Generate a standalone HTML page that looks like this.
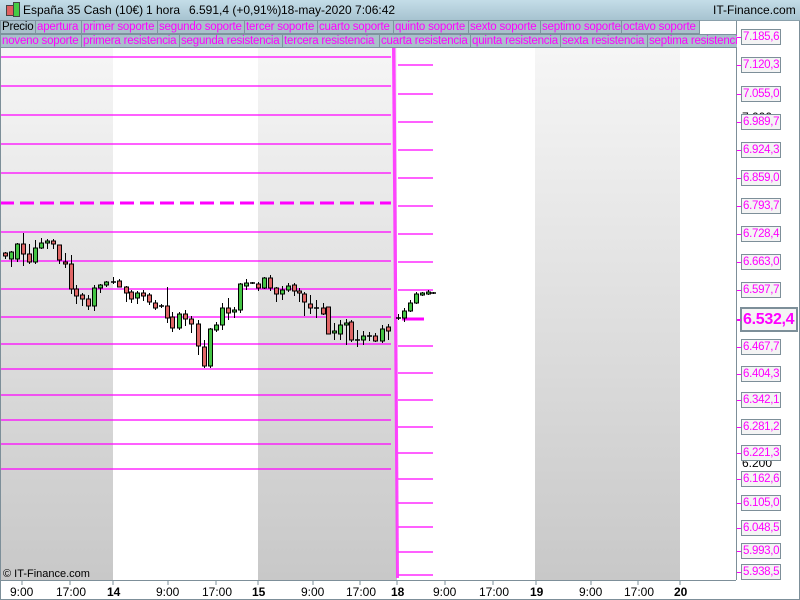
<!DOCTYPE html><html><head><meta charset="utf-8"><style>
*{margin:0;padding:0}body{width:800px;height:600px;overflow:hidden;background:#fff;font-family:"Liberation Sans",sans-serif;position:relative}
#title{position:absolute;left:0;top:0;width:800px;height:20px;background:linear-gradient(#c4dde8,#a7c3d0);border-bottom:1px solid #8aa0ab}
#title span{position:absolute;top:3px;font-size:12px;color:#000;white-space:nowrap}
.row{position:absolute;left:0;height:14px;width:737px;overflow:hidden;white-space:nowrap}
.row div{position:absolute;top:0;border:1px solid #7d939e;background:#a9c0cb;color:#f0f;font-size:11.5px;letter-spacing:-0.2px;line-height:12px;padding-left:1px;box-sizing:border-box;height:14px;overflow:hidden}
.lab{position:absolute;left:741px;width:40px;height:16px;border:1px solid #7d8f99;background:#f4f4f4;color:#f0f;font-size:11.5px;letter-spacing:-0.3px;line-height:14px;padding-left:1px;box-sizing:border-box;overflow:hidden;white-space:nowrap}
.t{position:absolute;font-size:12px;top:585px}
</style></head><body>
<svg width="800" height="600" style="position:absolute;left:0;top:0">
<defs><linearGradient id="g" x1="0" y1="0" x2="0" y2="1"><stop offset="0" stop-color="#f6f6f6"/><stop offset="1" stop-color="#c8c8c8"/></linearGradient></defs>
<rect x="0" y="48" width="736" height="532" fill="#fff"/>
<rect x="1" y="48" width="112" height="532" fill="url(#g)"/>
<rect x="258" y="48" width="139" height="532" fill="url(#g)"/>
<rect x="535" y="48" width="145" height="532" fill="url(#g)"/>
<g stroke="#f0f" stroke-width="1.3">
<line x1="0" y1="57" x2="391" y2="57"/><line x1="0" y1="86" x2="391" y2="86"/><line x1="0" y1="115" x2="391" y2="115"/><line x1="0" y1="144" x2="391" y2="144"/><line x1="0" y1="173" x2="391" y2="173"/><line x1="0" y1="232" x2="391" y2="232"/><line x1="0" y1="261" x2="391" y2="261"/><line x1="0" y1="289" x2="391" y2="289"/><line x1="0" y1="317" x2="391" y2="317"/><line x1="0" y1="344" x2="391" y2="344"/><line x1="0" y1="369" x2="391" y2="369"/><line x1="0" y1="395" x2="391" y2="395"/><line x1="0" y1="420" x2="391" y2="420"/><line x1="0" y1="444" x2="391" y2="444"/><line x1="0" y1="469" x2="391" y2="469"/>
<line x1="398" y1="65" x2="433" y2="65"/><line x1="398" y1="94" x2="433" y2="94"/><line x1="398" y1="122" x2="433" y2="122"/><line x1="398" y1="150" x2="433" y2="150"/><line x1="398" y1="178" x2="433" y2="178"/><line x1="398" y1="206" x2="433" y2="206"/><line x1="398" y1="234" x2="433" y2="234"/><line x1="398" y1="262" x2="433" y2="262"/><line x1="398" y1="290" x2="433" y2="290"/><line x1="398" y1="346" x2="433" y2="346"/><line x1="398" y1="373" x2="433" y2="373"/><line x1="398" y1="400" x2="433" y2="400"/><line x1="398" y1="427" x2="433" y2="427"/><line x1="398" y1="453" x2="433" y2="453"/><line x1="398" y1="479" x2="433" y2="479"/><line x1="398" y1="503" x2="433" y2="503"/><line x1="398" y1="527" x2="433" y2="527"/><line x1="398" y1="552" x2="433" y2="552"/><line x1="398" y1="575" x2="433" y2="575"/>
</g>
<line x1="0" y1="203" x2="391" y2="203" stroke="#f0f" stroke-width="3" stroke-dasharray="14,6"/>
<line x1="402" y1="319" x2="424" y2="319" stroke="#f0f" stroke-width="3"/>
<polygon points="392,48 395.5,48 399,578 396,578" fill="#f3f" opacity="0.9"/>
<g stroke="#000" stroke-width="1" id="c"></g>
<rect x="736" y="20" width="64" height="580" fill="#fff"/>
<line x1="736.5" y1="20" x2="736.5" y2="580" stroke="#7d8f99"/>
<line x1="0" y1="580.5" x2="736" y2="580.5" stroke="#7d8f99"/>
<rect x="0.5" y="0.5" width="799" height="599" fill="none" stroke="#7d8f99"/>
<g stroke="#7d8f99"><line x1="22" y1="581" x2="22" y2="585"/><line x1="70" y1="581" x2="70" y2="585"/><line x1="113" y1="581" x2="113" y2="585"/><line x1="168" y1="581" x2="168" y2="585"/><line x1="216" y1="581" x2="216" y2="585"/><line x1="258" y1="581" x2="258" y2="585"/><line x1="313" y1="581" x2="313" y2="585"/><line x1="360" y1="581" x2="360" y2="585"/><line x1="397" y1="581" x2="397" y2="585"/><line x1="445" y1="581" x2="445" y2="585"/><line x1="493" y1="581" x2="493" y2="585"/><line x1="536" y1="581" x2="536" y2="585"/><line x1="591" y1="581" x2="591" y2="585"/><line x1="638" y1="581" x2="638" y2="585"/><line x1="680" y1="581" x2="680" y2="585"/></g>
<text x="742" y="121" font-size="12" font-family="Liberation Sans">7.000</text>
<text x="742" y="467" font-size="12" font-family="Liberation Sans">6.200</text>
</svg>
<div id="title"><span style="left:6px;top:5px;width:6px;height:9px;background:#e06060;border:1px solid #444"></span><span style="left:13px;top:2px;width:5px;height:13px;background:#44cc44;border:1px solid #444"></span>
<span style="left:23px">España 35 Cash (10€)</span><span style="left:146px">1 hora</span><span style="left:189px">6.591,4 (+0,91%)</span><span style="left:281px">18-may-2020 7:06:42</span><span style="left:713px">IT-Finance.com</span></div>
<div class="row" style="top:20px;width:700px">
<div style="left:0;width:36px;color:#000">Precio</div><div style="left:35px;width:47px">apertura</div><div style="left:81px;width:77px">primer soporte</div><div style="left:157px;width:88px">segundo soporte</div><div style="left:244px;width:74px">tercer soporte</div><div style="left:317px;width:77px">cuarto soporte</div><div style="left:393px;width:76px">quinto soporte</div><div style="left:468px;width:73px">sexto soporte</div><div style="left:540px;width:82px">septimo soporte</div><div style="left:621px;width:79px">octavo soporte</div></div>
<div class="row" style="top:34px">
<div style="left:0;width:82px">noveno soporte</div><div style="left:81px;width:99px">primera resistencia</div><div style="left:179px;width:104px">segunda resistencia</div><div style="left:282px;width:98px">tercera resistencia</div><div style="left:379px;width:92px">cuarta resistencia</div><div style="left:470px;width:91px">quinta resistencia</div><div style="left:560px;width:88px">sexta resistencia</div><div style="left:647px;width:95px">septima resistencia</div></div>
<div id="labs"></div>
<div style="position:absolute;left:3px;top:568px;font-size:11px">© IT-Finance.com</div>
<span class="t" style="left:10px">9:00</span><span class="t" style="left:56px">17:00</span><b class="t" style="left:107px">14</b><span class="t" style="left:156px">9:00</span><span class="t" style="left:202px">17:00</span><b class="t" style="left:252px">15</b><span class="t" style="left:301px">9:00</span><span class="t" style="left:346px">17:00</span><b class="t" style="left:391px">18</b><span class="t" style="left:433px">9:00</span><span class="t" style="left:479px">17:00</span><b class="t" style="left:530px">19</b><span class="t" style="left:579px">9:00</span><span class="t" style="left:624px">17:00</span><b class="t" style="left:674px">20</b>
<script>
var L=[["7.185,6",37],["7.120,3",65],["7.055,0",94],["6.989,7",122],["6.924,3",150],["6.859,0",178],["6.793,7",206],["6.728,4",234],["6.663,0",262],["6.597,7",290],["6.467,7",347],["6.404,3",374],["6.342,1",400],["6.281,2",427],["6.221,3",453],["6.162,6",479],["6.105,0",503],["6.048,5",528],["5.993,0",551],["5.938,5",572]];
var h="";L.forEach(function(a){h+='<div class="lab" style="top:'+(a[1]-8)+'px">'+a[0]+'</div><div style="position:absolute;left:737px;top:'+a[1]+'px;width:4px;height:1px;background:#f0f"></div>'});
h+='<div class="lab" style="top:307px;left:740px;width:58px;height:25px;font-size:16px;letter-spacing:-0.3px;font-weight:bold;line-height:21px;border-width:2px">6.532,4</div><div style="position:absolute;left:737px;top:319px;width:4px;height:2px;background:#f0f"></div>';
document.getElementById("labs").innerHTML=h;
var C=[[5,253,256,252,259],[11,259,252,251,267],[17,259,244,243,262],[23,244,254,233,266],[29,254,262,244,264],[35,262,248,240,264],[41,248,243,238,249],[47,243,241,239,249],[53,241,244,239,249],[59,245,260,245,264],[65,262,264,253,268],[71,264,289,255,294],[76,289,296,285,304],[82,295,299,293,306],[88,299,306,295,310],[94,306,288,285,311],[100,288,285,284,293],[106,285,282,281,287],[113,282,282,277,284],[119,281,287,279,287],[126,287,293,286,302],[131,292,299,290,303],[137,298,293,291,304],[143,293,296,290,301],[149,295,302,293,305],[155,303,308,300,310],[161,306,306,304,308],[167,306,318,287,323],[172,317,328,312,332],[179,328,314,312,330],[185,314,319,310,326],[191,319,324,316,333],[198,324,346,320,355],[204,347,366,340,368],[210,366,329,328,368],[216,330,325,322,332],[222,325,308,303,330],[228,308,313,298,320],[234,312,310,307,318],[240,310,284,283,313],[246,286,283,279,290],[252,283,283,282,284],[258,284,288,282,291],[264,288,278,277,289],[270,278,288,275,291],[276,288,294,287,302],[282,294,290,286,300],[288,290,286,283,292],[294,285,291,283,296],[299,291,293,288,302],[304,294,302,292,316],[310,304,308,295,314],[316,308,308,300,318],[323,308,314,303,315],[328,307,334,307,334],[334,333,331,323,340],[340,334,325,320,340],[346,325,323,319,345],[351,322,340,320,342],[357,340,340,330,347],[363,340,336,331,345],[369,336,336,332,341],[375,336,341,333,342],[382,341,329,325,343],[388,327,331,324,340],[398,318,318,314,320],[404,318,311,308,322],[410,311,303,300,312],[416,303,294,292,304],[422,295,293,292,296],[428,294,292,290,295],[433,293,294,292,294]];
var s="";C.forEach(function(c){var t=Math.min(c[1],c[2]),b=Math.max(c[1],c[2]);var col=c[2]<c[1]?"#44c444":"#e06666";s+='<line x1="'+(c[0]+.5)+'" y1="'+c[3]+'" x2="'+(c[0]+.5)+'" y2="'+c[4]+'"/>';if(b-t<1.5)s+='<line x1="'+(c[0]-2)+'" y1="'+t+'" x2="'+(c[0]+3)+'" y2="'+t+'" stroke-width="1.5"/>';else s+='<rect x="'+(c[0]-1.5)+'" y="'+t+'" width="4" height="'+(b-t)+'" fill="'+col+'"/>'});
document.getElementById("c").innerHTML=s;
</script>
</body></html>
